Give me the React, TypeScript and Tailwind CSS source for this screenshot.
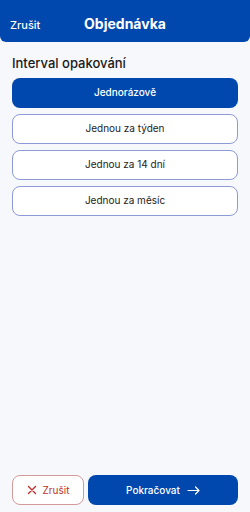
import React from "react";

const options = ["Jednorázově", "Jednou za týden", "Jednou za 14 dní", "Jednou za měsíc"];

export default function App() {
  const selected = 0;
  return (
    <div
      className="w-[250px] h-[512px] bg-[#f7f8fc] flex flex-col text-[#1a1a1a]"
      style={{ fontFamily: "Inter, 'Noto Sans', sans-serif" }}
    >
      {/* HEADER */}
      <header className="h-[42px] bg-[#0048ad] rounded-b-[6px] flex items-end pb-[9px] px-[10px] relative">
        <span className="text-white text-[11px] font-medium">Zrušit</span>
        <span className="absolute left-0 right-0 bottom-[8px] text-center text-white text-[14px] font-bold">
          Objednávka
        </span>
      </header>

      {/* BODY */}
      <main className="flex-1 px-[12px] pt-[12px]">
        <h2 className="text-[13px] font-medium mb-[4px]">Interval opakování</h2>
        <div className="flex flex-col gap-[6px]">
          {options.map((o, i) =>
            i === selected ? (
              <button
                key={i}
                className="h-[30px] rounded-[8px] bg-[#0048ad] text-white text-[10px] font-medium"
              >
                {o}
              </button>
            ) : (
              <button
                key={i}
                className="h-[30px] rounded-[8px] bg-white border border-[#8d9ad6] text-[#222] text-[10px]"
              >
                {o}
              </button>
            ),
          )}
        </div>
      </main>

      {/* FOOTER */}
      <footer className="flex gap-[4px] px-[12px] pb-[7px]">
        <button className="w-[72px] h-[30px] rounded-[8px] bg-white border border-[#d49a9a] text-[#c0302a] text-[10px] flex items-center justify-center gap-[6px]">
          <svg width="10" height="10" viewBox="0 0 10 10" fill="none" stroke="currentColor" strokeWidth="1.4" strokeLinecap="round">
            <path d="M1.5 1.5l7 7M8.5 1.5l-7 7" />
          </svg>
          Zrušit
        </button>
        <button className="flex-1 h-[30px] rounded-[8px] bg-[#0048ad] text-white text-[10px] font-medium flex items-center justify-center gap-[7px]">
          Pokračovat
          <svg width="13" height="9" viewBox="0 0 13 9" fill="none" stroke="currentColor" strokeWidth="1.2" strokeLinecap="round" strokeLinejoin="round">
            <path d="M1 4.5h11M8.5 1l3.5 3.5L8.5 8" />
          </svg>
        </button>
      </footer>
    </div>
  );
}
